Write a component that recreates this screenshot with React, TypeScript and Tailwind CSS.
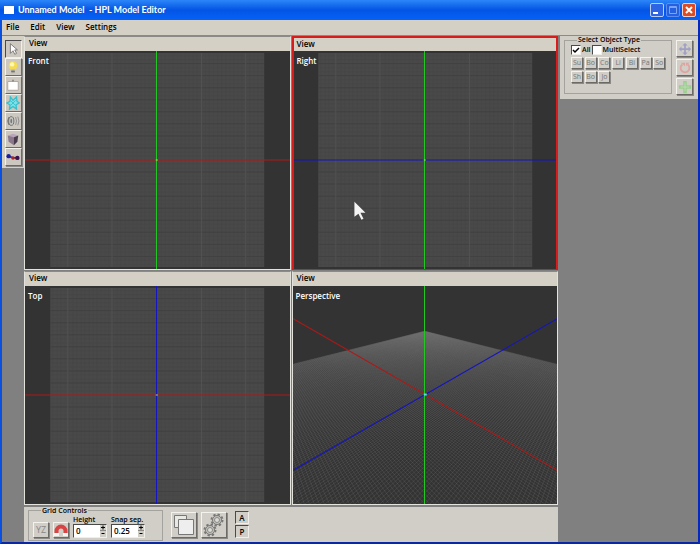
import { type ReactNode } from "react";
import clsx from "clsx";

type Axis = "red" | "green" | "blue";

const AXIS_COLORS: Record<Axis, string> = {
  red: "#b01818",
  green: "#20c820",
  blue: "#1414c0",
};

const MENU_ITEMS = ["File", "Edit", "View", "Settings"];
const OBJECT_TYPES = ["Su", "Bo", "Co", "Li", "Bi", "Pa", "So", "Sh", "Bo", "Jo"];

const RAISED = "border border-t-[#f4f2ec] border-l-[#f4f2ec] border-r-[#6c6a66] border-b-[#6c6a66] shadow-[1px_1px_0_#8c8a86]";
const SUNKEN = "border border-t-[#4a4a4a] border-l-[#4a4a4a] border-r-[#efeee8] border-b-[#efeee8]";

export default function App() {
  return (
    <div className="flex min-h-screen flex-col bg-[#0a50e0] font-['Open_Sans','Noto_Sans',sans-serif] text-[8px] leading-3 font-semibold text-black">
      <TitleBar />
      <div className="flex grow flex-col border-x-2 border-b-2 border-l-[#0a50e0] border-r-[#0828b8] border-b-[#0828a8] bg-[#808080]">
        <nav className="flex h-4 items-center gap-[11px] border-b border-[#8c8a86] bg-[#d4d0c6] px-1 pb-0.5">
          {MENU_ITEMS.map((item) => (
            <button key={item}>{item}</button>
          ))}
        </nav>
        <div className="flex grow">
          <ToolColumn />
          <main className="flex grow flex-col">
            <div className="grid grow grid-cols-2 grid-rows-2 gap-px">
              <Viewport label="Front">
                <OrthoGrid horizontal="red" vertical="green" />
              </Viewport>
              <Viewport label="Right" active>
                <OrthoGrid horizontal="blue" vertical="green" pointer />
              </Viewport>
              <Viewport label="Top">
                <OrthoGrid horizontal="red" vertical="blue" />
              </Viewport>
              <Viewport label="Perspective">
                <PerspectiveGrid />
              </Viewport>
            </div>
            <GridControls />
          </main>
          <ObjectPanel />
        </div>
      </div>
    </div>
  );
}

function TitleBar() {
  return (
    <header className="flex h-5 items-center gap-1 bg-linear-to-b from-[#2c86f8] via-[#0454e4] to-[#0662f8] px-1">
      <span className="h-2 w-2.5 bg-white" />
      <h1 className="grow font-['Lato',sans-serif] text-[9px] font-bold whitespace-pre text-white">
        Unnamed Model  - HPL Model Editor
      </h1>
      <div className="flex gap-0.5">
        <WindowButton label="Minimize">
          <path d="M3 10h5" stroke="#fff" strokeWidth="2" />
        </WindowButton>
        <WindowButton label="Maximize" dimmed>
          <path d="M3.5 3.5h7v7h-7zM3.5 4.5h7" stroke="#7aa4f4" fill="none" />
        </WindowButton>
        <WindowButton label="Close" close>
          <path d="M4 4l6 6M10 4l-6 6" stroke="#fff" strokeWidth="2" />
        </WindowButton>
      </div>
    </header>
  );
}

function WindowButton({
  label,
  close,
  dimmed,
  children,
}: {
  label: string;
  close?: boolean;
  dimmed?: boolean;
  children: ReactNode;
}) {
  return (
    <button
      aria-label={label}
      className={clsx(
        "flex h-3.5 w-3.5 items-center justify-center rounded-xs border",
        close
          ? "border-[#f4d0c8] bg-[#dc4c24]"
          : dimmed
            ? "border-[#5c8cf0] bg-[#2460e0]"
            : "border-[#b8ccf8] bg-[#2c64e4]",
      )}
    >
      <svg viewBox="0 0 14 14" className="h-3.5 w-3.5 shrink-0">
        {children}
      </svg>
    </button>
  );
}

function ToolColumn() {
  return (
    <aside className="w-[22px] shrink-0">
      <div className="flex flex-col items-center bg-[#d4d0c6] pt-1 pb-0.5">
        <ToolButton label="Select" pressed>
          <path d="M5 2v11l3-3 2 4 2-1-2-4h3z" fill="#fff" stroke="#555" strokeWidth=".8" />
        </ToolButton>
        <ToolButton label="Lights">
          <circle cx="8" cy="6.5" r="5" fill="#f4dc50" />
          <circle cx="7" cy="5" r="2.5" fill="#fff6b8" />
          <path d="M6 11h4v4H6z" fill="#a8a49c" />
          <path d="M6 13h4" stroke="#666" />
        </ToolButton>
        <ToolButton label="Billboards">
          <path d="M2 4h12v10H2z" fill="#fff" stroke="#a8a49c" />
          <path d="M7 2h2v2H7z" fill="#888" />
        </ToolButton>
        <ToolButton label="Particle systems">
          <path
            d="M5 1l3 4 4-4 .5 5L15 8l-3.500 2L12 15l-4-3-4 3 .5-5L1 8l3.500-2z"
            fill="#7ce0e8"
            stroke="#38c0cc"
            strokeWidth="1.500"
          />
          <path d="M5 5l6 6M11 5l-6 6" stroke="#38c0cc" />
        </ToolButton>
        <ToolButton label="Sounds">
          <g fill="none" stroke="#666">
            <path d="M4 4H3q-2 4 0 8h1" />
            <ellipse cx="6" cy="8" rx="3" ry="5" fill="#c4c4c0" />
            <ellipse cx="6" cy="8" rx="1" ry="2.500" fill="#777" stroke="none" />
            <path d="M11 3.500q2 4.500 0 9M13.500 3q2.500 5 0 10" stroke="#888" />
          </g>
        </ToolButton>
        <ToolButton label="Bodies">
          <path d="M2 4l6-2 6 2-5 2z" fill="#b8a4bc" />
          <path d="M2 4l7 2v9l-6-4z" fill="#8c788c" />
          <path d="M9 6l5-2-1 7-4 4z" fill="#4c3c50" />
        </ToolButton>
        <ToolButton label="Joints">
          <path d="M3 7l5 2h5" stroke="#444" strokeWidth="2" fill="none" />
          <circle cx="3" cy="7" r="2.500" fill="#20209c" />
          <circle cx="8" cy="9" r="2" fill="#b02030" />
          <circle cx="13" cy="9" r="2.500" fill="#3c1050" />
        </ToolButton>
      </div>
    </aside>
  );
}

function ToolButton({ label, pressed, children }: { label: string; pressed?: boolean; children: ReactNode }) {
  return (
    <button
      aria-label={label}
      className={clsx("flex h-[18px] w-[17px] items-center justify-center bg-[#ccc8c0]", pressed ? SUNKEN : RAISED)}
    >
      <svg viewBox="0 0 16 16" className="h-3.5 w-3.5">
        {children}
      </svg>
    </button>
  );
}

function Viewport({ label, active, children }: { label: string; active?: boolean; children: ReactNode }) {
  return (
    <section
      className={clsx(
        "flex min-w-0 flex-col",
        active
          ? "border-x-2 border-t-2 border-b border-[#d81c1c]"
          : "border border-[#e4e2dc] border-t-[#8c8a86]",
      )}
    >
      <div className={clsx("flex shrink-0 items-center bg-[#d4d0c6] pb-0.5", active ? "h-[13px] px-[3px]" : "h-3.5 px-1")}>
        <button>View</button>
      </div>
      <div className="relative grow overflow-hidden bg-[#333]">
        {children}
        <span className="absolute top-1 left-[3px] text-white">{label}</span>
      </div>
    </section>
  );
}

function OrthoGrid({ horizontal, vertical, pointer }: { horizontal: Axis; vertical: Axis; pointer?: boolean }) {
  const rows = Array.from({ length: 17 }, (_, i) => 12 + i * 12).filter((y) => y !== 108);
  const fineLines = Array.from({ length: 53 }, (_, i) => 4 + i * 4);
  return (
    <svg viewBox="0 0 265 217" preserveAspectRatio="xMidYMid slice" className="absolute h-full w-full">
      <path d="M26 2h213v213H26z" fill="#494949" />
      {fineLines.map((n) => (
        <path key={n} d={`M26 ${n}.5h213M${n + 24}.5 2v213`} stroke="#464646" strokeWidth=".5" />
      ))}
      {rows.map((y) => (
        <path key={y} d={`M26 ${y}.5h213`} stroke="#414141" />
      ))}
      <path d="M43.500 2v213M87.500 2v213M176.500 2v213M220.500 2v213" stroke="#525252" />
      <path d="M0 108.500h265" stroke={AXIS_COLORS[horizontal]} strokeWidth="1.200" />
      <path d="M132 0v217" stroke={AXIS_COLORS[vertical]} shapeRendering="crispEdges" />
      <path d="M131 108h2v1h-2z" fill="#c8d870" />
      {pointer && <path d="M62 150v15l4-3 3 6 2-1-3-6h5z" fill="#f4f4f4" />}
    </svg>
  );
}

// ground plane seen from the (1, 1, 1) direction
function project(x: number, z: number) {
  const across = (x - z) / 2;
  const away = (x + z) / 2;
  const depth = 1 + away * 0.817;
  return [132 + (158 * across) / depth, 108 - (158 * away * 0.576) / depth];
}

function gridPath(extent: number, count: number) {
  const parts: string[] = [];
  for (let i = 0; i <= count; i++) {
    const t = -extent + (2 * extent * i) / count;
    // stop short of the camera plane
    const near = Math.max(-extent, -1.8 - t);
    const [ax, ay] = project(t, near);
    const [bx, by] = project(t, extent);
    const [cx, cy] = project(near, t);
    const [dx, dy] = project(extent, t);
    parts.push(`M${ax} ${ay}L${bx} ${by}M${cx} ${cy}L${dx} ${dy}`);
  }
  return parts.join("");
}

function PerspectiveGrid() {
  return (
    <svg viewBox="0 0 265 217" preserveAspectRatio="xMidYMid slice" className="absolute h-full w-full">
      <path d={gridPath(1.595, 200)} fill="none" stroke="#808080" strokeOpacity=".35" strokeWidth=".6" />
      <path d="M0 32L265 184" stroke={AXIS_COLORS.red} />
      <path d="M0 184L265 32" stroke={AXIS_COLORS.blue} />
      <path d="M132 0v217" stroke={AXIS_COLORS.green} shapeRendering="crispEdges" />
      <path d="M131 107h3v2h-3z" fill="#50e0e8" />
    </svg>
  );
}

function GridControls() {
  return (
    <footer className="mt-0.5 flex h-[35px] shrink-0 items-center bg-[#d0cec6] pl-1">
      <fieldset className="flex h-8 w-[135px] items-end gap-1 border border-[#a4a29c] px-1 pb-0.5 text-[7px]">
        <legend className="ml-2 h-1 px-px leading-1">Grid Controls</legend>
        <button className={clsx("h-4 w-4 text-[9px] font-medium text-[#888]", RAISED)}>YZ</button>
        <button aria-label="Snap to grid" className={clsx("flex h-4 w-4 items-center justify-center", RAISED)}>
          <svg viewBox="0 0 16 16" className="h-4 w-4 shrink-0">
            <path d="M3.500 11V9a4.500 4.500 0 0 1 9 0v2" fill="none" stroke="#d84444" strokeWidth="4" />
            <path d="M1 11h5v3H1zM10 11h5v3h-5z" fill="#f4f4f4" />
          </svg>
        </button>
        <Spinner id="height" label="Height" value="0" />
        <Spinner id="snap" label="Snap sep." value="0.25" />
      </fieldset>
      <button aria-label="Layers" className={clsx("ml-2 h-[26px] w-[26px]", RAISED)}>
        <svg viewBox="0 0 24 24">
          <path d="M2.500 2.500h12v12h-12z" fill="#e8e8e4" stroke="#777" />
          <path d="M6.500 6.500h15v15h-15z" fill="#eee" stroke="#777" />
        </svg>
      </button>
      <button aria-label="Options" className={clsx("ml-1 h-[26px] w-[26px]", RAISED)}>
        <svg viewBox="0 0 24 24">
          <Gear cx={15} cy={7} />
          <Gear cx={8} cy={17} />
        </svg>
      </button>
      <div className="ml-2 flex flex-col gap-px">
        <button className={clsx("h-[13px] w-3.5 leading-2", SUNKEN)}>A</button>
        <button className={clsx("h-[13px] w-3.5 leading-2", SUNKEN)}>P</button>
      </div>
    </footer>
  );
}

function Gear({ cx, cy }: { cx: number; cy: number }) {
  return (
    <g fill="none">
      <circle cx={cx} cy={cy} r="5.500" stroke="#777" strokeWidth="2" strokeDasharray="2.300 2" />
      <circle cx={cx} cy={cy} r="4.500" fill="#c4c2bc" stroke="#777" />
      <circle cx={cx} cy={cy} r="2.500" fill="#dcdad4" stroke="#888" />
    </g>
  );
}

function Spinner({ id, label, value }: { id: string; label: string; value: string }) {
  return (
    <div className="flex flex-col">
      <label htmlFor={id} className="leading-2 whitespace-nowrap">
        {label}
      </label>
      <div className={clsx("flex h-3.5 w-[34px] bg-white", SUNKEN)}>
        <input id={id} defaultValue={value} className="w-0 grow pl-0.5 text-[8px] outline-none" />
        <div className="flex w-1.5 flex-col bg-[#d0cec6]">
          <button aria-label={`Increase ${label}`} className="h-1.5 border-b border-[#8c8a86]">
            <svg viewBox="0 0 6 5" className="h-[5px] w-1.5">
              <path d="M1 2.500h4M3 .5v4" stroke="#000" />
            </svg>
          </button>
          <button aria-label={`Decrease ${label}`} className="h-1.5">
            <svg viewBox="0 0 6 5" className="h-[5px] w-1.5">
              <path d="M1.500 2.500h3" stroke="#000" />
            </svg>
          </button>
        </div>
      </div>
    </div>
  );
}

function ObjectPanel() {
  return (
    <aside className="w-[140px] shrink-0 pl-0.5">
      <div className="flex h-[63px] gap-1 bg-[#d0cec6] pl-1">
        <fieldset className="h-[58px] w-[108px] border border-[#a4a29c] px-1.5 text-[7px]">
          <legend className="ml-1.5 h-2 px-px leading-2">Select Object Type</legend>
          <div className="flex h-3 items-center gap-px">
            <CheckBox id="all" label="All" checked />
            <CheckBox id="multi" label="MultiSelect" />
          </div>
          <div className="mt-px grid grid-cols-7 gap-x-0.5 gap-y-0.5">
            {OBJECT_TYPES.map((type, i) => (
              <button key={i} className={clsx("h-3 w-3 leading-2.5 font-medium text-[#777]", RAISED)}>
                {type}
              </button>
            ))}
          </div>
        </fieldset>
        <div className="flex flex-col gap-0.5 pt-1">
          <SideButton label="Translate">
            <path d="M8 1l3 3H9v3h3V5l3 3-3 3V9H9v3h2l-3 3-3-3h2V9H4v2L1 8l3-3v2h3V4H5z" fill="#a0a0c4" />
          </SideButton>
          <SideButton label="Rotate">
            <path d="M5 4a5 5 0 1 0 6 0" fill="none" stroke="#e0a4a0" strokeWidth="2" />
            <path d="M3 2h5v4zM13 2H9v4z" fill="#e0a4a0" />
          </SideButton>
          <SideButton label="Scale">
            <path d="M6 1h4v5h5v4h-5v5H6v-5H1V6h5z" fill="#98d08c" />
            <path d="M8 3v10M3 8h10" stroke="#c4d8bc" />
          </SideButton>
        </div>
      </div>
    </aside>
  );
}

function CheckBox({ id, label, checked }: { id: string; label: string; checked?: boolean }) {
  return (
    <>
      <span className="relative flex">
        <input
          id={id}
          type="checkbox"
          defaultChecked={checked}
          className={clsx("peer h-2.5 w-2.5 appearance-none bg-white", SUNKEN)}
        />
        <svg viewBox="0 0 10 10" className="pointer-events-none absolute hidden h-2.5 w-2.5 peer-checked:block">
          <path d="M2 5l2 2 4-4" fill="none" stroke="#000" strokeWidth="1.500" />
        </svg>
      </span>
      <label htmlFor={id}>{label}</label>
    </>
  );
}

function SideButton({ label, children }: { label: string; children: ReactNode }) {
  return (
    <button aria-label={label} className={clsx("flex h-[17px] w-[17px] items-center justify-center", RAISED)}>
      <svg viewBox="0 0 16 16" className="h-3.5 w-3.5">
        {children}
      </svg>
    </button>
  );
}
